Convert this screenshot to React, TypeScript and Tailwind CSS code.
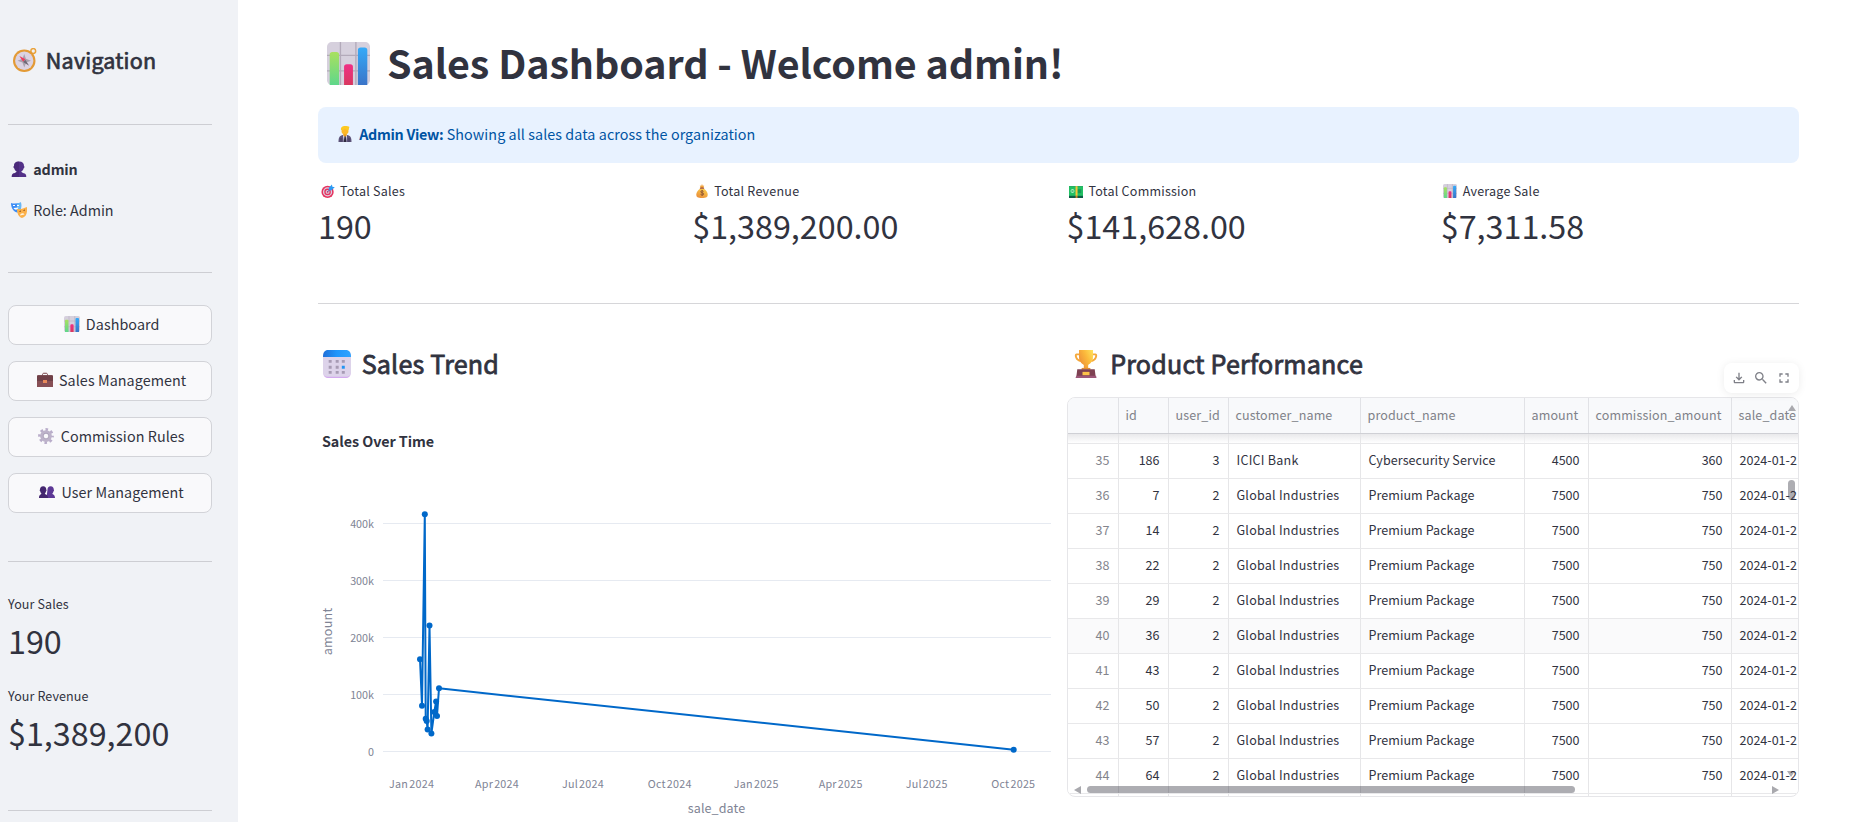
import type { ReactNode } from "react";
import { MdFullscreen, MdOutlineFileDownload, MdSearch } from "react-icons/md";

type EmojiName =
  | "compass" | "bust" | "busts" | "masks" | "chart" | "briefcase" | "gear"
  | "worker" | "target" | "moneybag" | "banknote" | "calendar" | "trophy";

const glyphs: Record<EmojiName, ReactNode> = {
  compass: (
    <>
      <circle cx="27" cy="4" r="3.2" fill="none" stroke="#e9a23b" strokeWidth="2" />
      <circle cx="15" cy="17" r="15" fill="#e39a35" />
      <circle cx="15" cy="17" r="12.2" fill="#dcd3e2" />
      <path d="M15 8l2.2 6.4L24 17l-6.4 2.4L15 26l-2.4-6.6L6 17l6.6-2.6z" fill="#a9a2ae" />
      <path d="M8.5 10.5l8 4.5-3 3.2z" fill="#ef3a5d" />
      <path d="M21.5 23.5l-8-4.8 3-3.2z" fill="#6f6875" />
    </>
  ),
  bust: (
    <>
      <path d="M6 10C6 4 9 1 16 1s10 3 10 9c1.5 1 1 4-.6 4.4C24.500 18 22 20 20.500 21c1 2.500 4 3 7 4.200 2 .8 3 3 3 6.800H1.500c0-3.800 1-6 3-6.800 3-1.200 6-1.700 7-4.200C10 20 7.500 18 6.600 14.400 5 14 4.500 11 6 10z" fill="#533188" />
      <path d="M6 10C6 4 9 1 16 1v31H1.500c0-3.800 1-6 3-6.800 3-1.200 6-1.700 7-4.200C10 20 7.500 18 6.600 14.400 5 14 4.500 11 6 10z" fill="#44256f" opacity=".6" />
    </>
  ),
  busts: (
    <>
      <path d="M17 11c0-4 2-6.500 6.300-6.500S29.500 7 29.500 11c1 1 .6 3-.4 3.300-.5 2.500-1.600 4-2.600 4.700.6 2 5.500 2 5.500 9H15z" fill="#5c3795" />
      <path d="M2 11c0-4 2-6.500 6.300-6.500S14.500 7 14.500 11c1 1 .6 3-.4 3.300-.5 2.500-1.600 4-2.600 4.700.8 2.200 6.500 2 6.500 9H0c0-7 4.400-6.800 5-9-1-.7-2.100-2.200-2.600-4.700C1.400 14 1 12 2 11z" fill="#44266f" />
    </>
  ),
  masks: (
    <>
      <path d="M0 2c6 2 13 1 20-1 1 8 1 18-8 20C4 19 0 11 0 2z" fill="#3d8df5" />
      <path d="M12 2.500c3-.2 5.500-.8 8-1.500 1 8 1 18-8 20z" fill="#67b8f5" />
      <path d="M4 7h4M12 7h4" stroke="#fff" strokeWidth="2.200" />
      <path d="M5 12c3 5 8 4 10-1z" fill="#fff" />
      <path d="M12 14c7 1 13-1 20-4 1 11-1 20-10 22-7-2-10-10-10-18z" fill="#fbb049" />
      <path d="M17 19l3-1M25 17l3-1" stroke="#8a4b1d" strokeWidth="2" />
      <path d="M18 27c1-5 7-6 9-2z" fill="#fff3df" />
    </>
  ),
  chart: (
    <>
      <rect width="32" height="32" rx="3.500" fill="#d6d0dd" />
      <path d="M0 10h32M0 21.500h32M10 0v32M21.500 0v32" stroke="#b3aaba" strokeWidth="1" />
      <path d="M2 9.500A2 2 0 0 1 4 7.500h3a2 2 0 0 1 2 2V32H2z" fill="url(#barGreen)" />
      <path d="M12.700 18.500a2 2 0 0 1 2-2h2.600a2 2 0 0 1 2 2V32h-6.600z" fill="url(#barPink)" />
      <path d="M23 6a2 2 0 0 1 2-2h3a2 2 0 0 1 2 2v26h-7z" fill="url(#barBlue)" />
    </>
  ),
  briefcase: (
    <>
      <path d="M11 7V5.500C11 3.500 12 2.500 14 2.500h4c2 0 3 1 3 3V7" fill="none" stroke="#7b4247" strokeWidth="2" />
      <path d="M2.500 6.500h27A2.500 2.500 0 0 1 32 9v21H0V9a2.500 2.500 0 0 1 2.500-2.500z" fill="#874f55" />
      <path d="M2.500 6.500h27A2.500 2.500 0 0 1 32 9v9H0V9a2.500 2.500 0 0 1 2.500-2.500z" fill="#6f4047" />
      <rect x="12" y="16" width="8" height="6" fill="#e98a5a" />
    </>
  ),
  gear: (
    <>
      <circle cx="16" cy="16" r="12.800" fill="none" stroke="#b9adca" strokeWidth="6" strokeDasharray="5.030 5.020" strokeDashoffset="2.500" />
      <circle cx="16" cy="16" r="8.500" fill="none" stroke="#bdb3ca" strokeWidth="6.500" />
      <circle cx="16" cy="16" r="5.600" fill="none" stroke="#998da9" strokeWidth="1.200" />
    </>
  ),
  worker: (
    <>
      <path d="M3 32c0-9 2-13 9-14h8c7 1 9 5 9 14z" fill="#5c5379" />
      <path d="M12 18h8l-1.500 14h-5z" fill="#e9e3f2" />
      <path d="M15 20h2.500l1 12h-5z" fill="#2e2a3f" />
      <path d="M8 24v8M24 24v8" stroke="#3c3656" strokeWidth="1.500" />
      <path d="M12.500 13h7v6l-3.500 2.500-3.500-2.500z" fill="#e79a20" />
      <ellipse cx="16" cy="9.500" rx="7" ry="7.500" fill="#fdb827" />
      <path d="M8 8C7 2 11 0 16 0c4 0 7 0 9 2-1 1-1 4-2 6-3 0-5-1-7-3-2 2-5 3-8 3z" fill="#fdc921" />
    </>
  ),
  target: (
    <>
      <circle cx="15" cy="18" r="14" fill="#e5335f" />
      <circle cx="15" cy="18" r="10.500" fill="#ddd2e2" />
      <circle cx="15" cy="18" r="7.500" fill="#e5335f" />
      <circle cx="15" cy="18" r="4.500" fill="#ddd2e2" />
      <circle cx="15" cy="18" r="2" fill="#e5335f" />
      <path d="M15 18L25 8" stroke="#3a5ea8" strokeWidth="2" />
      <path d="M18 8.500L25 1l1 5 5.500 1.500L24 14.500l-6 .5z" fill="#2c9af3" />
    </>
  ),
  moneybag: (
    <>
      <path d="M11 3l3 1.500L16 0l2 4.500L21 3l-2 6h-6z" fill="#f2a33b" />
      <path d="M12 10h8c6 4 9 9 9 14 0 6-3 8-13 8S3 30 3 24c0-5 3-10 9-14z" fill="url(#bag)" />
      <rect x="11" y="8" width="10" height="2.800" rx="1" fill="#9a4a33" />
      <path d="M19.500 17c-1-2-6.500-2-6.500.800 0 3.400 7 1.600 7 5 0 3-6 3-7.500.7M16.300 13.800v13.500" fill="none" stroke="#7c4531" strokeWidth="1.700" />
    </>
  ),
  banknote: (
    <>
      <rect y="5" width="32" height="27" fill="#0d5d46" />
      <rect y="5" width="32" height="22" fill="#22c064" />
      <circle cx="8" cy="16" r="4.500" fill="#a8f0c1" />
      <path d="M5 13l6 6M11 13l-6 6" stroke="#15994a" strokeWidth="1.500" />
      <rect x="19" y="12" width="9" height="9" fill="#159a55" />
      <rect x="15" y="5" width="4.500" height="22" fill="#fcc235" />
      <rect x="15" y="27" width="4.500" height="5" fill="#c5812d" />
    </>
  ),
  calendar: (
    <>
      <rect x=".5" y="1" width="31" height="31" rx="5" fill="#d3a9ee" />
      <rect x="0" y="1" width="32" height="29.500" rx="5" fill="#ddd3ea" />
      <path d="M0 8C0 2.500 2 0 6 0h20c4 0 6 2.500 6 8z" fill="url(#calTop)" />
      <path d="M6.500 13h3.400M14.500 13h3.400M21.500 13h3.400M6.500 19.700h3.400M14.500 19.700h3.400M6.500 25.500h3.400M14.500 25.500h3.400M21.500 25.500h3.400" stroke="#a79bb4" strokeWidth="3.200" />
      <path d="M21.500 19.700h3.400" stroke="#2394f2" strokeWidth="3.400" />
    </>
  ),
  trophy: (
    <>
      <path d="M9 5H5C3.500 5 4.300 12 10 12.500M23 5h4c1.500 0 .7 7-5 7.500" fill="none" stroke="#f5a93c" strokeWidth="2.200" />
      <path d="M8 0h16v8c0 5-3 7.500-5.500 9v4h-5v-4C11 15.500 8 13 8 8z" fill="url(#cup)" />
      <path d="M11 20.500h10v2H11z" fill="#e08c33" />
      <path d="M6 22h20l1 8H5z" fill="#7e4152" />
      <path d="M5 29.500h22.500l.5 2.500H4z" fill="#9c5678" />
      <rect x="12" y="25" width="8" height="3.800" fill="#fcc24a" />
    </>
  ),
};

function Emoji({ name, className }: { name: EmojiName; className: string }) {
  return (
    <svg viewBox="0 0 32 32" className={`inline-block shrink-0 ${className}`} aria-hidden="true">
      {glyphs[name]}
    </svg>
  );
}

function Gradients() {
  return (
    <svg className="absolute size-0" aria-hidden="true">
      <defs>
        <linearGradient id="barGreen" x1="0" y1="0" x2="0" y2="1"><stop stopColor="#a9e05f" /><stop offset="1" stopColor="#5fd78b" /></linearGradient>
        <linearGradient id="barPink" x1="0" y1="0" x2="0" y2="1"><stop stopColor="#f02f86" /><stop offset="1" stopColor="#d8385f" /></linearGradient>
        <linearGradient id="barBlue" x1="0" y1="0" x2="0" y2="1"><stop stopColor="#35aaf8" /><stop offset="1" stopColor="#3a74c8" /></linearGradient>
        <linearGradient id="bag" x1="0.800" y1="0" x2="0.300" y2="1"><stop stopColor="#fccf4b" /><stop offset="1" stopColor="#ea8f3a" /></linearGradient>
        <linearGradient id="calTop"><stop stopColor="#1f6fd8" /><stop offset="0.500" stopColor="#2196fb" /><stop offset="1" stopColor="#2fa4ff" /></linearGradient>
        <linearGradient id="cup" x1="1" y1="0" x2="0" y2="0.600"><stop stopColor="#ffe45c" /><stop offset="0.500" stopColor="#fbb93c" /><stop offset="1" stopColor="#ee9138" /></linearGradient>
      </defs>
    </svg>
  );
}

const menu: { icon: EmojiName; label: string }[] = [
  { icon: "chart", label: "Dashboard" },
  { icon: "briefcase", label: "Sales Management" },
  { icon: "gear", label: "Commission Rules" },
  { icon: "busts", label: "User Management" },
];

const EMOJI_16 = "size-4 mx-[3px] align-[-2px]";
const EMOJI_14 = "size-[14px] mx-[2.600px] align-[-2px]";

function Sidebar() {
  return (
    <aside className="h-full w-[238px] shrink-0 bg-[#f0f2f6] pt-[44px] pr-[26px] pl-2">
      <h2 className="text-[21.500px] leading-8 whitespace-nowrap [-webkit-text-stroke:0.7px]">
        <Emoji name="compass" className="mx-[4.500px] size-6 align-[-3px]" /> <span className="tracking-[0.2px]">Navigation</span>
      </h2>
      <hr className="mt-12 border-[#cdced3]" />
      <p className="mt-8 text-[14.330px] leading-6 font-bold">
        <Emoji name="bust" className={EMOJI_16} /> <span className="tracking-[-0.15px]">admin</span>
      </p>
      <p className="mt-[17px] text-[14.330px] leading-6">
        <Emoji name="masks" className={EMOJI_16} /> Role: Admin
      </p>
      <hr className="mt-[50px] border-[#cdced3]" />
      <nav className="mt-8 flex flex-col gap-4">
        {menu.map((m) => (
          <button key={m.label} className="h-10 rounded-lg border border-[#d2d3d8] bg-[#f9f9fb] pb-0.5 text-center text-[14.330px] leading-6 tracking-[0.07px] whitespace-nowrap">
            <Emoji name={m.icon} className={EMOJI_16} /> {m.label}
          </button>
        ))}
      </nav>
      <hr className="mt-12 border-[#cdced3]" />
      <div className="mt-8 text-[12.540px] leading-5 tracking-[0.1px]">Your Sales</div>
      <div className="mt-1 text-[32.300px] leading-[44px]">190</div>
      <div className="mt-6 text-[12.540px] leading-5 tracking-[0.1px]">Your Revenue</div>
      <div className="mt-1 text-[32.300px] leading-[44px]">$1,389,200</div>
      <hr className="mt-14 border-[#cdced3]" />
    </aside>
  );
}

const metrics: { icon: EmojiName; label: string; value: string }[] = [
  { icon: "target", label: "Total Sales", value: "190" },
  { icon: "moneybag", label: "Total Revenue", value: "$1,389,200.00" },
  { icon: "banknote", label: "Total Commission", value: "$141,628.00" },
  { icon: "chart", label: "Average Sale", value: "$7,311.58" },
];

const points = [
  [102, 262.300], [104, 308.700], [106.800, 117.200], [107.700, 321.700], [108.700, 324], [109.600, 332.400],
  [111.500, 228.400], [113.400, 336.400], [116.300, 315], [118.100, 304.500], [119, 319], [121, 291.300], [695.700, 352.700],
];
const yTicks: [string, number][] = [["400k", 126.500], ["300k", 183.500], ["200k", 240.500], ["100k", 297.500], ["0", 354.500]];
const xTicks: [string, number][] = [
  ["Jan 2024", 93.600], ["Apr 2024", 179], ["Jul 2024", 265], ["Oct 2024", 351.700],
  ["Jan 2025", 438.300], ["Apr 2025", 522.700], ["Jul 2025", 608.700], ["Oct 2025", 695.300],
];

function TrendChart() {
  return (
    <svg width="733" height="425" viewBox="0 0 733 425" className="block">
      <text x="4" y="49.500" className="fill-[#31333f] text-[14.330px] font-bold tracking-[-0.07px]">Sales Over Time</text>
      {yTicks.map(([label, y]) => (
        <g key={label}>
          <line x1="65" x2="733" y1={y} y2={y} stroke="#e6eaf1" />
          <text x="56" y={y + 4} textAnchor="end" className="fill-[#808495] text-[10.750px]">{label}</text>
        </g>
      ))}
      {xTicks.map(([label, x]) => (
        <text key={label} x={x} y="390.500" textAnchor="middle" className="fill-[#808495] text-[10.750px] tracking-[0.25px] [word-spacing:-1.6px]">{label}</text>
      ))}
      <polyline points={points.map((p) => p.join(",")).join(" ")} fill="none" stroke="#0068c9" strokeWidth="2" strokeLinejoin="round" />
      {points.map(([x, y]) => (
        <circle key={x} cx={x} cy={y} r="3" fill="#0068c9" />
      ))}
      <text x="398.500" y="415.500" textAnchor="middle" className="fill-[#808495] text-[12.540px] tracking-[0.1px]">sale_date</text>
      <text transform="translate(14 234.500) rotate(-90)" textAnchor="middle" className="fill-[#808495] text-[12.540px] tracking-[0.25px]">amount</text>
    </svg>
  );
}

const columns: { label: string; width: string; align: string }[] = [
  { label: "", width: "w-[51px]", align: "text-right text-[#83848c]" },
  { label: "id", width: "w-[50px]", align: "text-right" },
  { label: "user_id", width: "w-[60px]", align: "text-right" },
  { label: "customer_name", width: "w-[132px]", align: "text-left tracking-[0.24px]" },
  { label: "product_name", width: "w-[164px]", align: "text-left tracking-[0.06px]" },
  { label: "amount", width: "w-[64px]", align: "text-right" },
  { label: "commission_amount", width: "w-[143px]", align: "text-right" },
  { label: "sale_date", width: "w-[76px]", align: "text-left" },
];

const rows: string[][] = [
  ["35", "186", "3", "ICICI Bank", "Cybersecurity Service", "4500", "360", "2024-01-2"],
  ...[["36", "7"], ["37", "14"], ["38", "22"], ["39", "29"], ["40", "36"], ["41", "43"], ["42", "50"], ["43", "57"], ["44", "64"]].map(
    ([n, id]) => [n, id, "2", "Global Industries", "Premium Package", "7500", "750", "2024-01-2"],
  ),
];

function DataTable() {
  return (
    <div className="relative h-[400px] w-[732px] overflow-hidden rounded-lg border border-[#e6e6e9] text-[12.540px] whitespace-nowrap">
      <div className="flex h-9 w-[740px] border-b border-[#cfd0d5] bg-[#f8f9fb] text-[#808289]">
        {columns.map((c) => (
          <div key={c.label} className={`${c.width} shrink-0 border-r border-[#e1e2e6] pl-[7px] leading-[33px] tracking-[0.12px]`}>{c.label}</div>
        ))}
      </div>
      <div className="flex h-2.5 w-[740px] border-b border-[#e8e8ea] bg-linear-to-b from-[#e9e9eb] to-white">
        {columns.map((c) => (
          <div key={c.label} className={`${c.width} shrink-0 border-r border-[#e6e6e8]`} />
        ))}
      </div>
      {rows.map((r) => (
        <div key={r[0]} className={`flex h-[35px] w-[740px] border-b border-[#e8e8ea] ${r[0] === "40" ? "bg-[#fafafb]" : "bg-white"}`}>
          {columns.map((c, i) => (
            <div key={c.label} className={`${c.width} ${c.align} shrink-0 border-r border-[#e6e6e8] px-2 leading-8`}>{r[i]}</div>
          ))}
        </div>
      ))}
      <div className="flex h-1 w-[740px]">
        {columns.map((c) => (
          <div key={c.label} className={`${c.width} shrink-0 border-r border-[#e6e6e8]`} />
        ))}
      </div>
      <svg className="absolute top-[7px] right-[2px]" width="8" height="6" viewBox="0 0 8 6"><path d="M4 0l4 6H0z" fill="#a9a9ae" /></svg>
      <div className="absolute top-[82px] right-[3px] h-5 w-[7px] rounded-full bg-[#31333f]/40" />
      <svg className="absolute top-[373px] right-[3px]" width="8" height="6" viewBox="0 0 8 6"><path d="M0 0h8L4 6z" fill="#31333f" fillOpacity=".4" /></svg>
      <svg className="absolute top-[388px] left-[6px]" width="7" height="8" viewBox="0 0 7 8"><path d="M7 0v8L0 4z" fill="#a9a9ae" /></svg>
      <div className="absolute top-[388px] left-[19px] h-[7px] w-[488px] rounded-full bg-[#31333f]/40" />
      <svg className="absolute top-[388px] left-[704px]" width="7" height="8" viewBox="0 0 7 8"><path d="M0 0v8l7-4z" fill="#a9a9ae" /></svg>
    </div>
  );
}

export default function App() {
  return (
    <div className="flex h-[822px] w-[1856px] overflow-hidden bg-white font-['Noto_Sans_CJK_SC','Source_Sans_Pro',sans-serif] text-[#31333f]">
      <Gradients />
      <Sidebar />
      <main className="w-[1618px] shrink-0 pt-[35px] pr-[57px] pl-20">
        <h1 className="text-[39.400px] leading-[53px] font-bold whitespace-nowrap">
          <Emoji name="chart" className="mx-[8.500px] size-[43px] align-[-6px]" /> <span className="tracking-[-0.07px]">Sales Dashboard - Welcome admin!</span>
        </h1>
        <div className="mt-[19px] h-14 rounded-lg bg-[#e8f2ff] px-4 pt-[15px] text-[14.330px] leading-6 text-[#0054a3]">
          <Emoji name="worker" className={EMOJI_16} /> <b className="tracking-[-0.3px]">Admin View:</b> <span className="tracking-[0.07px]">Showing all sales data across the organization</span>
        </div>
        <div className="mt-[18px] grid grid-cols-4 gap-4">
          {metrics.map((m) => (
            <div key={m.label}>
              <div className="text-[12.540px] leading-5">
                <Emoji name={m.icon} className={EMOJI_14} /> <span className="tracking-[0.22px]">{m.label}</span>
              </div>
              <div className="mt-[2px] text-[32.300px] leading-[44px]">{m.value}</div>
            </div>
          ))}
        </div>
        <hr className="mt-14 border-[#d6d6d9]" />
        <div className="mt-[42px] grid grid-cols-2 gap-4">
          <section>
            <h3 className="mb-[17px] text-[25.070px] leading-[34px] [-webkit-text-stroke:0.8px]">
              <Emoji name="calendar" className="mx-[5px] size-7 align-[-4px]" /> <span className="tracking-[0.2px]">Sales Trend</span>
            </h3>
            <TrendChart />
          </section>
          <section className="relative">
            <h3 className="mb-[17px] text-[25.070px] leading-[34px] [-webkit-text-stroke:0.8px]">
              <Emoji name="trophy" className="mx-[5px] size-7 align-[-4px]" /> <span className="tracking-[0.2px]">Product Performance</span>
            </h3>
            <DataTable />
            <div className="absolute top-[17px] right-0 flex h-[30px] w-[75px] items-center rounded-lg bg-white pl-[7px] text-[#7f8088] shadow-[0_1px_8px_rgba(0,0,0,0.08)]">
              <MdOutlineFileDownload size={16} />
              <MdSearch size={16} className="ml-[6px]" />
              <MdFullscreen size={16} className="ml-[7px]" />
            </div>
          </section>
        </div>
      </main>
    </div>
  );
}
